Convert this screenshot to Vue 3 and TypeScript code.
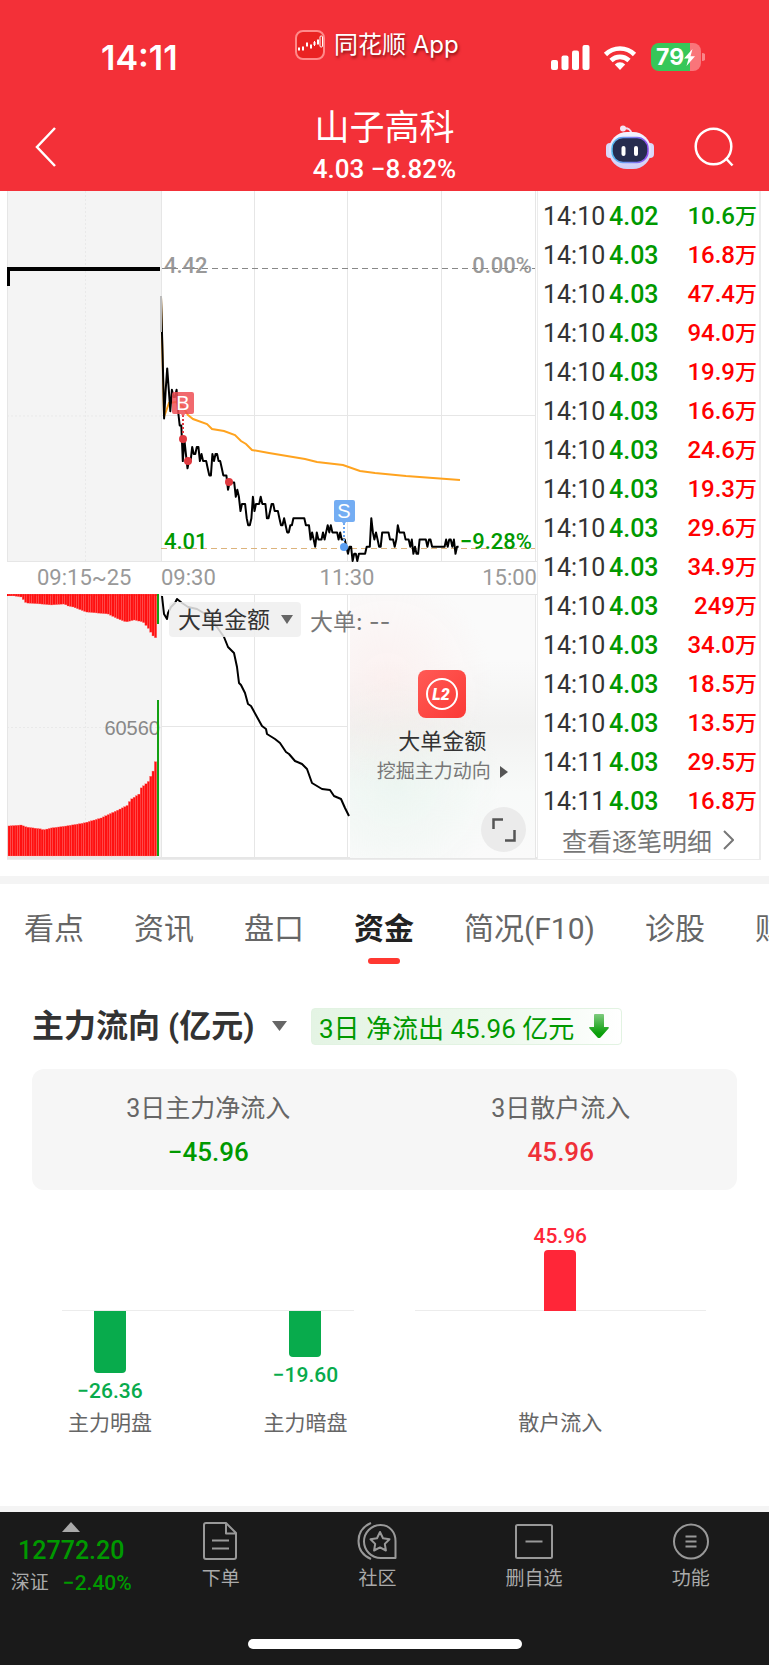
<script setup lang="ts">
import { ref } from 'vue'

type Point = [number, number]

interface Trade {
  time: string
  price: string
  amount: string
  up: boolean
}

const trades: Trade[] = [
  ['14:10', '4.02', '10.6', false],
  ['14:10', '4.03', '16.8', true],
  ['14:10', '4.03', '47.4', true],
  ['14:10', '4.03', '94.0', true],
  ['14:10', '4.03', '19.9', true],
  ['14:10', '4.03', '16.6', true],
  ['14:10', '4.03', '24.6', true],
  ['14:10', '4.03', '19.3', true],
  ['14:10', '4.03', '29.6', true],
  ['14:10', '4.03', '34.9', true],
  ['14:10', '4.03', '249', true],
  ['14:10', '4.03', '34.0', true],
  ['14:10', '4.03', '18.5', true],
  ['14:10', '4.03', '13.5', true],
  ['14:11', '4.03', '29.5', true],
  ['14:11', '4.03', '16.8', true],
].map(([time, price, amount, up]) => ({ time, price, amount, up }) as Trade)

// Minute closes since 09:30, in cents above 4.00
const closes: number[] = [
  38, 30, 21, 25, 28, 25, 22, 25, 24, 24, 25, 22, 20, 20, 15, 18, 16, 14, 15, 15,
  17, 16, 16, 17, 17, 15, 16, 15, 15, 15, 14, 13, 13, 16, 15, 16, 16, 15, 15, 14,
  13, 13, 13, 11, 12, 12, 12, 12, 10, 11, 10, 8, 9, 9, 9, 7, 6, 6, 7, 10,
  8, 9, 9, 9, 10, 9, 9, 9, 7, 7, 8, 9, 9, 8, 8, 8, 7, 6, 6, 7,
  6, 5, 5, 6, 6, 7, 7, 7, 7, 7, 7, 7, 7, 6, 6, 6, 4, 5, 4, 3,
  5, 4, 4, 4, 5, 4, 5, 6, 5, 6, 5, 5, 5, 5, 4, 5, 4, 4, 4, 3,
  2, 3, 3, 1, 2, 2, 1, 2, 2, 2, 2, 2, 3, 3, 3, 7, 5, 4, 5, 4,
  3, 3, 5, 5, 5, 5, 5, 4, 4, 4, 3, 4, 6, 5, 5, 5, 5, 4, 4, 4,
  3, 4, 2, 3, 2, 2, 4, 4, 4, 4, 4, 3, 4, 4, 3, 3, 3, 3, 3, 3,
  3, 3, 3, 4, 3, 4, 4, 3, 4, 2, 3, 3,
]
const priceLine = closes
  .map((c, m) => `${(154 + m * 1.558).toFixed(1)},${(355.7 - (c - 3) * 7.13).toFixed(1)}`)
  .join(' ')

const averageLine =
  '154,105 157,226 162,212 169,211 176,216 181,224 186,228 200,233 205,238 217,240 228,244 234,250 239,253 245,259 262,262 286,266 298,268 310,271 336,274 353,280 368,282 399,285 453,289'

const bigOrderLine =
  '155,2 157,20 160,25 161,19 164,13 168,9 170,5 175,9 181,13 190,15 200,21 210,33 217,43 221,53 227,59 230,73 232,89 234,91 238,99 241,110 244,112 250,123 255,132 259,135 260,140 268,145 273,149 279,158 282,160 288,167 295,170 300,175 305,189 315,195 323,196 327,202 334,205 338,214 342,222'

const interpolate = (points: Point[], x: number): number => {
  const i = points.findIndex((p) => p[0] >= x)
  if (i < 0) return points[points.length - 1][1]
  if (i === 0) return points[0][1]
  const [x0, y0] = points[i - 1]
  const [x1, y1] = points[i]
  return y0 + ((y1 - y0) * (x - x0)) / (x1 - x0)
}

const upperProfile: Point[] = [
  [0, 1], [13, 3], [18, 9], [33, 10], [43, 11], [56, 10], [60, 12], [65, 13], [78, 18],
  [100, 20], [110, 25], [118, 28], [126, 26], [135, 28], [140, 34], [145, 42], [149, 45],
]
const lowerProfile: Point[] = [
  [0, 30], [13, 31], [18, 29], [33, 27], [35, 26], [43, 28], [58, 30], [76, 33], [93, 38],
  [110, 46], [120, 51], [122, 56], [131, 62], [133, 68], [140, 74], [145, 85], [149, 101],
]
const bars = Array.from({ length: 63 }, (_, i) => {
  const x = 1 + i * 2.36
  return { x, upper: interpolate(upperProfile, x), lower: interpolate(lowerProfile, x) }
})

const tabs = ['看点', '资讯', '盘口', '资金', '简况(F10)', '诊股', '财务']
const activeTab = ref('资金')

const flows = [
  { items: [{ name: '主力明盘', value: '−26.36', size: 62, up: false }, { name: '主力暗盘', value: '−19.60', size: 46, up: false }] },
  { items: [{ name: '散户流入', value: '45.96', size: 62, up: true }] },
]
</script>

<template>
  <div class="page">
    <header class="top">
      <div class="status">
        <time class="clock">14:11</time>
        <div class="source">
          <svg class="app-icon" viewBox="0 0 30 30">
            <rect x="1" y="1" width="28" height="28" rx="7" fill="#ea2222" stroke="#ff8a8a" stroke-width="2" />
            <path d="M4 17v4M8 16v5M12 12v5M16 14v5M19.500 11v5M23 9v6" stroke="#fff" stroke-width="1" />
            <path d="M3 18h2v2H3zM7 17h2v3H7zM11 13h2v3h-2zM15 15h2v3h-2zM18.500 12h2v3h-2zM22 10h2v4h-2z" fill="#fff" />
            <rect x="25" y="6" width="2.500" height="11" rx="1" fill="#ea2222" stroke="#fff" />
          </svg>
          <span>同花顺 App</span>
        </div>
        <div class="signals">
          <svg width="39" height="25" viewBox="0 0 39 25" fill="#fff">
            <rect x="0" y="15" width="7" height="10" rx="2" />
            <rect x="10.500" y="10.500" width="7" height="14.500" rx="2" />
            <rect x="21" y="5.500" width="7" height="19.500" rx="2" />
            <rect x="31.500" y="0" width="7" height="25" rx="2" />
          </svg>
          <svg class="wifi" width="34" height="25" viewBox="0 0 34 25" fill="none" stroke="#fff" stroke-width="4.600">
            <path d="M2.500 9.500a20.500 20.500 0 0 1 29 0" />
            <path d="M8 15.500a13 13 0 0 1 18 0" />
            <path d="M17 25l-5.200-5.600a7.500 7.500 0 0 1 10.400 0z" fill="#fff" stroke="none" />
          </svg>
          <div class="battery">
            <span>79</span>
            <svg width="11" height="17" viewBox="0 0 11 17" fill="#fff"><path d="M8.500 0 0 9.500h4.500L2.500 17 11 7.200H6.500z" /></svg>
          </div>
          <svg class="nub" width="3" height="8" viewBox="0 0 3 8"><path d="M0 0a4 4 0 0 1 0 8z" fill="#f9868a" /></svg>
        </div>
      </div>
      <div class="titlebar">
        <button class="bare back" aria-label="返回">
          <svg width="22" height="40" viewBox="0 0 22 40" fill="none" stroke="#fff" stroke-width="2.500"><path d="M20 1 2 20l18 19" /></svg>
        </button>
        <div class="heading">
          <h1>山子高科</h1>
          <p>4.03 −8.82%</p>
        </div>
        <div class="tools">
          <button class="bare" aria-label="智能助手">
            <svg width="48" height="44" viewBox="0 0 48 44">
              <defs>
                <linearGradient id="shell" x1="0" y1="0" x2="0" y2="1"><stop offset="0" stop-color="#f4f4ff" /><stop offset="1" stop-color="#cfcdf6" /></linearGradient>
                <linearGradient id="visor" x1="0" y1="0" x2="1" y2="0"><stop offset="0" stop-color="#58bdf0" /><stop offset="1" stop-color="#9050ee" /></linearGradient>
              </defs>
              <path d="M17 3.500q8-1 8 5" fill="none" stroke="#f0dcf0" stroke-width="2" />
              <circle cx="17" cy="3.500" r="3" fill="#f4e4f4" />
              <rect x="0" y="18" width="8" height="15" rx="4" fill="#d9d8f8" />
              <rect x="40" y="18" width="8" height="15" rx="4" fill="#d9d8f8" />
              <rect x="3" y="7" width="42" height="37" rx="18" fill="url(#shell)" />
              <rect x="6" y="12.500" width="36" height="25" rx="11" fill="#262c4f" stroke="url(#visor)" stroke-width="1.500" />
              <rect x="15.500" y="21" width="4" height="10" rx="2" fill="#fff" />
              <rect x="28" y="21" width="4" height="10" rx="2" fill="#fff" />
            </svg>
          </button>
          <button class="bare" aria-label="搜索">
            <svg width="40" height="40" viewBox="0 0 40 40" fill="none" stroke="#fff" stroke-width="2.500"><circle cx="19.500" cy="19.500" r="17.800" /><path d="m31.500 31 7 7.500" /></svg>
          </button>
        </div>
      </div>
    </header>

    <section class="market">
      <div class="charts">
        <svg class="plot" viewBox="0 0 530 371">
          <rect width="154" height="371" fill="#f4f4f4" />
          <path d="M78.500 0v371M0 225h154" stroke="#e9e9e9" stroke-dasharray="2 2" fill="none" />
          <path d="M154.500 0v371M247.500 0v371M340.500 0v371M434.500 0v371M528.500 0v371M154 224.500h374M0 370.500h530M.5 0v371" stroke="#e6e6e6" stroke-width="1" fill="none" />
          <path d="M1.500 95V78" stroke="#000" stroke-width="3" />
          <path d="M0 78h153" stroke="#000" stroke-width="4" />
          <g class="tag-text muted">
            <text x="157" y="82">4.42</text>
            <text x="525" y="82" text-anchor="end">0.00%</text>
          </g>
          <path d="M155 77.500h373" stroke="#888" stroke-dasharray="6 4" />
          <path d="M154 357.500h374" stroke="#dcb37c" stroke-dasharray="6 4" />
          <polyline :points="averageLine" fill="none" stroke="#ffa31f" stroke-width="2" />
          <polyline :points="priceLine" fill="none" stroke="#000" stroke-width="2" stroke-linejoin="round" />
          <path d="M154 105v36" stroke="#bbb" stroke-width="2" />
          <g class="tag-text fall">
            <text x="157" y="358">4.01</text>
            <text x="525" y="358" text-anchor="end">−9.28%</text>
          </g>
          <g fill="#e03a40">
            <path d="M176 224v20" stroke="#e03a40" stroke-width="2" stroke-dasharray="2 2" />
            <circle cx="176" cy="248" r="4" /><circle cx="181" cy="270" r="4" /><circle cx="222" cy="291" r="4" />
          </g>
          <path d="M167 201h18a2 2 0 0 1 2 2v18a2 2 0 0 1-2 2h-7l-2 3-2-3h-7a2 2 0 0 1-2-2v-18a2 2 0 0 1 2-2z" fill="#ee4f55" fill-opacity=".85" />
          <text class="mark" x="176" y="219">B</text>
          <path d="M337 332v20" stroke="#69a6f2" stroke-width="2" stroke-dasharray="2 2" />
          <circle cx="337" cy="356" r="4" fill="#5b9ef2" />
          <path d="M329 309h17a2 2 0 0 1 2 2v18a2 2 0 0 1-2 2h-7l-2 3-2-3h-6a2 2 0 0 1-2-2v-18a2 2 0 0 1 2-2z" fill="#74adf3" />
          <text class="mark" x="337" y="327">S</text>
        </svg>
        <div class="axis"><span>09:15~25</span><span>09:30</span><span>11:30</span><span>15:00</span></div>
        <div class="sub">
          <svg class="plot" viewBox="0 0 530 265">
            <rect width="154" height="264" fill="#f4f4f4" />
            <path d="M78.500 0v264M0 133.500h154" stroke="#e9e9e9" stroke-dasharray="2 2" fill="none" />
            <path d="M154.500 0v264M247.500 0v264M340.500 0v264M154 132.500h187M154 .5h376M.5 0v264M528.500 0v264" stroke="#e6e6e6" fill="none" />
            <path d="M0 264h530" stroke="#e6e6e6" stroke-width="2" />
            <rect x="0" y="0" width="151" height="2" fill="#f00" />
            <g v-for="bar in bars" :key="bar.x" fill="#ff1010" stroke="#ff6a6a" stroke-width=".3">
              <rect :x="bar.x" y="0" width="2.400" :height="bar.upper" />
              <rect :x="bar.x" :y="262 - bar.lower" width="2.400" :height="bar.lower" />
            </g>
            <text class="volume" x="153" y="141">60560</text>
            <path d="M151 0v30M151 106v156" stroke="#12a012" stroke-width="2" />
            <polyline :points="bigOrderLine" fill="none" stroke="#000" stroke-width="2" stroke-linejoin="round" />
          </svg>
          <a class="promo" href="#l2">
            <svg width="48" height="48" viewBox="0 0 48 48">
              <defs><linearGradient id="badge" x1="0" y1="0" x2="1" y2="1"><stop offset="0" stop-color="#ff5a55" /><stop offset="1" stop-color="#fb3a36" /></linearGradient></defs>
              <rect width="48" height="48" rx="8" fill="url(#badge)" />
              <circle cx="24" cy="24" r="15" fill="none" stroke="#fff" stroke-width="2" />
              <text class="level" x="23" y="30">L2</text>
            </svg>
            <strong>大单金额</strong>
            <span class="hint">挖掘主力动向<svg width="8" height="12" viewBox="0 0 8 12"><path d="M0 0 8 6 0 12z" fill="#555" /></svg></span>
          </a>
          <div class="indicator">
            <label class="picker">
              <select aria-label="指标"><option>大单金额</option></select>
              <svg width="12" height="9" viewBox="0 0 12 9"><path d="M0 0h12L6 9z" fill="#666" /></svg>
            </label>
            <span>大单: --</span>
          </div>
          <button class="bare expand" aria-label="全屏">
            <svg width="26" height="26" viewBox="0 0 26 26" fill="none" stroke="#555" stroke-width="2.500"><path d="M2.500 12V2.500H12M14 23.500h9.500V13" /></svg>
          </button>
        </div>
      </div>
      <div class="ticks">
        <table aria-label="逐笔成交">
          <tbody>
            <tr v-for="(t, i) in trades" :key="i">
              <td class="t">{{ t.time }}</td>
              <td class="p">{{ t.price }}</td>
              <td class="a" :class="{ up: t.up }">{{ t.amount }}<small>万</small></td>
            </tr>
          </tbody>
        </table>
        <a class="more" href="#ticks">查看逐笔明细<svg width="11" height="20" viewBox="0 0 11 20" fill="none" stroke="#777" stroke-width="2"><path d="m1 1 9 9-9 9" /></svg></a>
      </div>
    </section>

    <nav class="tabs" aria-label="栏目">
      <button v-for="tab in tabs" :key="tab" class="bare tab" :class="{ active: tab === activeTab }" @click="activeTab = tab">{{ tab }}</button>
    </nav>

    <main class="funds">
      <div class="fund-head">
        <label class="picker big">
          <select aria-label="统计口径"><option>主力流向 (亿元)</option></select>
          <svg width="15" height="10" viewBox="0 0 15 10"><path d="M0 0h15L7.500 10z" fill="#666" /></svg>
        </label>
        <div class="flow-tag">
          <span>3日 净流出 45.96 亿元</span>
          <svg width="20" height="24" viewBox="0 0 20 24">
            <defs><linearGradient id="drop" x1="0" y1="0" x2="0" y2="1"><stop offset="0" stop-color="#7fcb7f" /><stop offset=".8" stop-color="#0a9f0a" /></linearGradient></defs>
            <path d="M5 1q0-1 1-1h8q1 0 1 1v12h4q1.500 0 .5 1.500l-8 9q-1.500 1.300-3 0l-8-9Q-.5 13 1 13h4z" fill="url(#drop)" />
          </svg>
        </div>
      </div>
      <dl class="summary">
        <div><dt>3日主力净流入</dt><dd class="fall">−45.96</dd></div>
        <div><dt>3日散户流入</dt><dd class="rise">45.96</dd></div>
      </dl>
      <div class="flow-chart">
        <div v-for="(group, g) in flows" :key="g" class="flow-group">
          <div v-for="item in group.items" :key="item.name" class="flow-item" :class="{ up: item.up }">
            <div class="above">
              <template v-if="item.up"><b>{{ item.value }}</b><i :style="{ height: item.size + 'px' }"></i></template>
            </div>
            <div class="below">
              <template v-if="!item.up"><i :style="{ height: item.size + 'px' }"></i><b>{{ item.value }}</b></template>
            </div>
            <span>{{ item.name }}</span>
          </div>
        </div>
      </div>
    </main>

    <footer class="bottom">
      <div class="dock">
        <button class="bare index">
          <svg width="18" height="10" viewBox="0 0 18 10"><path d="M9 0 18 10H0z" fill="#aaa" /></svg>
          <b>12772.20</b>
          <span><em>深证</em>−2.40%</span>
        </button>
        <button class="bare dock-item">
          <svg width="40" height="38" viewBox="0 0 40 38"><path d="M6 1h19l10 10v24a2 2 0 0 1-2 2H5a2 2 0 0 1-2-2V3a2 2 0 0 1 2-2zM25 1v10.500h10M11 18.500h17M11 26.500h17" /></svg>
          下单
        </button>
        <button class="bare dock-item">
          <svg width="40" height="38" viewBox="0 0 40 38"><path d="M14 1C7 4 1.500 10 1.500 19S7 34 14 37M38.500 36H24C14 36 7 28 7 19.500S14 3 23.500 3s15 7.500 15 16z" /><path d="m23 10 3 6.200 6.500 1-4.700 4.700 1.100 6.600-5.900-3.100-5.900 3.100 1.100-6.600-4.700-4.700 6.500-1z" /></svg>
          社区
        </button>
        <button class="bare dock-item">
          <svg width="40" height="38" viewBox="0 0 40 38"><rect x="2" y="3" width="36" height="33" rx="1.500" /><path d="M11.500 19.500h17" /></svg>
          删自选
        </button>
        <button class="bare dock-item">
          <svg width="40" height="38" viewBox="0 0 40 38"><circle cx="20" cy="19.500" r="17" /><path d="M14.500 14.500h11M14.500 19.500h11M14.500 24.500h11" /></svg>
          功能
        </button>
      </div>
      <div class="home"></div>
    </footer>
  </div>
</template>

<style>
body {
  margin: 0;
  background: #fff;
}
</style>

<style scoped>
.page {
  display: flex;
  flex-direction: column;
  min-height: 100vh;
  overflow: hidden;
  color: #333;
  font-family: Roboto, 'Noto Sans CJK SC', sans-serif;
}
.page * {
  box-sizing: border-box;
}
.bare {
  display: flex;
  align-items: center;
  padding: 0;
  border: 0;
  background: none;
  color: inherit;
  font: inherit;
}
svg {
  display: block;
  flex: none;
}
a {
  color: inherit;
  text-decoration: none;
}

.top {
  padding-top: 28px;
  background: #f33038;
  color: #fff;
}
.status {
  display: grid;
  grid-template-columns: 295fr 256fr 218fr;
  height: 76px;
}
.clock {
  padding: 10px 0 0 101px;
  font: 600 34px/40px Inter, sans-serif;
}
.source {
  display: flex;
  align-items: center;
  gap: 9px;
  height: 34px;
  font: 24px/34px Inter, 'Noto Sans CJK SC', sans-serif;
  text-shadow: 1px 2px 3px rgba(80, 0, 0, 0.7);
  white-space: nowrap;
}
.app-icon {
  width: 30px;
  height: 30px;
}
.signals {
  display: flex;
  align-items: center;
  height: 58px;
}
.wifi {
  margin: 0 14px 0 13px;
}
.battery {
  display: flex;
  align-items: center;
  width: 50px;
  height: 28px;
  padding-left: 5px;
  border-radius: 8px;
  background: linear-gradient(90deg, #37c759 78%, #f9757a 78%);
  font: 700 23px/28px Inter, sans-serif;
}
.nub {
  margin-left: 1px;
}
.titlebar {
  display: grid;
  grid-template-columns: 1fr auto 1fr;
  height: 87px;
  padding: 0 35px;
}
.back {
  height: 86px;
  justify-self: start;
}
.heading {
  text-align: center;
}
.heading h1 {
  margin: 0;
  font-weight: 400;
  font-size: 35px;
  line-height: 50px;
}
.heading p {
  margin: 0;
  font-weight: 500;
  font-size: 26px;
  line-height: 30px;
}
.tools {
  display: flex;
  justify-content: flex-end;
  align-items: center;
  gap: 40px;
  height: 86px;
}

.market {
  display: grid;
  grid-template-columns: minmax(0, 530fr) minmax(0, 224fr);
  margin: 0 8px 16px 7px;
  border-bottom: 1px solid #ececec;
}
.plot {
  width: 100%;
  height: auto;
}
.tag-text {
  font-size: 22px;
  font-weight: 500;
}
.muted {
  fill: #999;
}
.tag-text.fall {
  fill: #009900;
}
.mark {
  fill: #fff;
  font: 20px 'Liberation Sans', sans-serif;
  text-anchor: middle;
}
.volume {
  fill: #888;
  font: 20px 'Liberation Sans', sans-serif;
  text-anchor: end;
}
.axis {
  display: grid;
  grid-template-columns: 154fr 132fr 108fr 136fr;
  color: #999;
  font-size: 22px;
  line-height: 32px;
}
.axis span:first-child {
  padding-left: 30px;
}
.axis span:nth-child(3) {
  text-align: center;
}
.axis span:last-child {
  text-align: right;
}
.sub {
  position: relative;
}
.promo {
  position: absolute;
  inset: 1px 2px 1px auto;
  width: 35%;
  display: flex;
  flex-direction: column;
  align-items: center;
  padding-top: 75px;
  background:
    radial-gradient(circle at 20% 32%, rgba(255, 228, 226, 0.4), transparent 45%),
    radial-gradient(circle at 25% 72%, rgba(226, 242, 234, 0.5), transparent 45%),
    linear-gradient(#fafafa 25%, #f2f2f1 50%, #f8faf9 75%, #fafafa);
}
.promo strong {
  margin-top: 8px;
  color: #333;
  font-weight: 400;
  font-size: 22px;
  line-height: 32px;
}
.hint {
  display: flex;
  align-items: center;
  gap: 9px;
  color: #777;
  font-size: 19px;
  line-height: 28px;
}
.level {
  fill: #fff;
  font: italic 900 16px Roboto, sans-serif;
  text-anchor: middle;
}
.indicator {
  position: absolute;
  top: 8px;
  left: 162px;
  display: flex;
  align-items: center;
  gap: 9px;
  color: #777;
  font: 23px Inter, 'Noto Sans CJK SC', sans-serif;
}
.picker {
  display: flex;
  align-items: center;
  gap: 11px;
  height: 35px;
  padding: 0 8px 0 9px;
  border-radius: 4px;
  background: rgba(238, 238, 238, 0.85);
}
.picker select {
  appearance: none;
  padding: 0;
  border: 0;
  background: none;
  color: #333;
  font: inherit;
}
.expand {
  position: absolute;
  right: 11px;
  bottom: 7px;
  width: 45px;
  height: 45px;
  justify-content: center;
  border-radius: 50%;
  background: #ebebeb;
}
.ticks {
  padding: 6px 2px 0 5px;
  border: solid #ececec;
  border-width: 0 2px 0 1px;
}
table {
  width: 100%;
  border-collapse: collapse;
  font-weight: 500;
  font-size: 25px;
  line-height: 39px;
}
tr {
  height: 39px;
}
td {
  padding: 0;
  white-space: nowrap;
}
.t {
  width: 66px;
  font-weight: 400;
}
.p,
.a {
  color: #009900;
}
.a {
  font-size: 24px;
  text-align: right;
}
.a.up {
  color: #f00;
}
.a small {
  font-size: 22px;
  line-height: 1;
}
.more {
  display: flex;
  align-items: center;
  gap: 11px;
  height: 38px;
  padding-left: 19px;
  color: #777;
  font-size: 25px;
}

.tabs {
  display: flex;
  gap: 50px;
  height: 95px;
  padding: 0 24px;
  border-top: 8px solid #f4f4f4;
  color: #666;
  font-size: 30px;
  overflow: hidden;
}
.tab {
  position: relative;
  flex: none;
  height: 87px;
  padding-bottom: 4px;
  white-space: nowrap;
}
.active {
  color: #222;
  font-weight: 700;
}
.active::after {
  content: '';
  position: absolute;
  bottom: 7px;
  left: 14px;
  width: 32px;
  height: 6px;
  border-radius: 3px;
  background: #ff3831;
}

.funds {
  flex: 1;
  padding: 36px 32px 0;
  border-bottom: 6px solid #f4f4f4;
}
.fund-head {
  display: flex;
  align-items: center;
  gap: 24px;
}
.picker.big {
  gap: 17px;
  height: 38px;
  padding: 0;
  background: none;
  font-weight: 700;
  font-size: 32px;
}
.flow-tag {
  display: flex;
  align-items: center;
  gap: 15px;
  height: 37px;
  padding: 0 12px 0 7px;
  border: 1px solid #e2f3e2;
  border-radius: 4px;
  background: linear-gradient(90deg, #e4f4e4, #eff9ef 65%, #fff);
  color: #009900;
  font-size: 26px;
  white-space: nowrap;
}
.summary {
  display: grid;
  grid-template-columns: 1fr 1fr;
  height: 121px;
  margin: 24px 0 0;
  padding-top: 21px;
  border-radius: 12px;
  background: #f6f6f6;
  text-align: center;
}
dt {
  color: #666;
  font-size: 25px;
  line-height: 38px;
}
dd {
  margin: 7px 0 0;
  font-weight: 500;
  font-size: 26px;
  line-height: 34px;
}
dd.fall {
  color: #009900;
}
dd.rise {
  color: #ef3038;
}
.flow-chart {
  display: grid;
  grid-template-columns: 1fr 1fr;
  gap: 61px;
  padding: 32px 31px 0 30px;
}
.flow-group {
  position: relative;
  display: flex;
  justify-content: space-between;
}
.flow-group::before {
  content: '';
  position: absolute;
  top: 88px;
  width: 100%;
  height: 1px;
  background: #ececec;
}
.flow-item {
  position: relative;
  display: flex;
  flex-direction: column;
  align-items: center;
  width: 96px;
}
.flow-item:only-child {
  width: 100%;
}
.above,
.below {
  display: flex;
  flex-direction: column;
  align-items: center;
  height: 89px;
}
.above {
  justify-content: flex-end;
}
.below {
  height: 96px;
}
.flow-item i {
  width: 32px;
  border-radius: 0 0 4px 4px;
  background: #08ab4c;
}
.flow-item b {
  margin-top: 4px;
  color: #08ab4c;
  font-weight: 500;
  font-size: 21px;
  line-height: 28px;
}
.up i {
  border-radius: 4px 4px 0 0;
  background: #ff2638;
}
.up b {
  margin: 0;
  color: #ff2638;
}
.flow-item span {
  color: #666;
  font-size: 21px;
  line-height: 32px;
}

.bottom {
  height: 153px;
  padding-top: 9px;
  background: #1a1a1a;
  color: #aaa;
}
.dock {
  display: grid;
  grid-template-columns: 142fr repeat(4, 156fr);
  height: 118px;
}
.dock .bare {
  flex-direction: column;
  align-self: start;
}
.dock-item {
  gap: 4px;
  padding-top: 1px;
  font-size: 19px;
  line-height: 30px;
}
.dock-item svg {
  fill: none;
  stroke: #999;
  stroke-width: 2;
  stroke-linejoin: round;
}
.index b {
  margin: 3px 0 1px;
  color: #009900;
  font-weight: 500;
  font-size: 25px;
  line-height: 32px;
}
.index span {
  display: flex;
  gap: 14px;
  color: #009900;
  font-weight: 500;
  font-size: 21px;
  line-height: 30px;
}
.index em {
  color: #aaa;
  font-style: normal;
  font-weight: 400;
  font-size: 19px;
}
.index svg {
  margin-top: 1px;
}
.home {
  width: 274px;
  height: 10px;
  margin: 0 auto;
  border-radius: 5px;
  background: #fff;
}
</style>
